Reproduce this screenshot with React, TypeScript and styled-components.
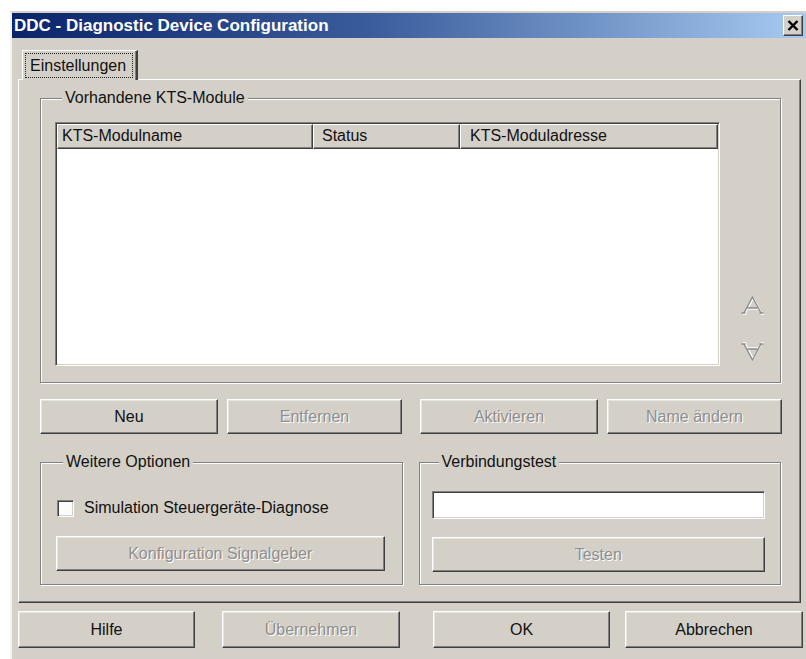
import React from "react";
import styled, { createGlobalStyle, css } from "styled-components";

const FACE = "#d4d0c8";
const SHADOW = "#808080";
const DARK = "#404040";

const GlobalStyle = createGlobalStyle`
  html, body {
    margin: 0;
    padding: 0;
    background: #ffffff;
  }
  body {
    font-family: "Liberation Sans", Arial, sans-serif;
    font-size: 16px;
    color: #111;
  }
  #root {
    width: 806px;
    height: 659px;
    overflow: hidden;
  }
`;

/* ---------- window frame ---------- */

const Window = styled.div`
  margin: 11px 0 0 10px;
  width: 796px;
  height: 660px;
  box-sizing: border-box;
  background: ${FACE};
  border-top: 2px solid ${FACE};
  border-left: 2px solid #f4f3f1;
  display: flex;
  flex-direction: column;
`;

const TitleBar = styled.div`
  height: 25px;
  flex: none;
  display: flex;
  align-items: center;
  justify-content: space-between;
  padding: 0 3px 0 2px;
  background: linear-gradient(90deg, #0a246a 0%, #3a5c9c 45%, #a6caf0 100%);
`;

const Title = styled.span`
  color: #ffffff;
  font-weight: bold;
  font-size: 17px;
  line-height: 25px;
  white-space: nowrap;
`;

const CloseButton = styled.button`
  width: 20px;
  height: 21px;
  padding: 0;
  display: flex;
  align-items: center;
  justify-content: center;
  background: ${FACE};
  border: 1px solid;
  border-color: #ffffff ${DARK} ${DARK} #ffffff;
  box-shadow: inset -1px -1px ${SHADOW};
`;

const Body = styled.div`
  padding: 12px 0 0 6px;
  display: flex;
  flex-direction: column;
`;

/* ---------- tab control ---------- */

const TabStrip = styled.div`
  display: flex;
  padding-left: 4px;
  position: relative;
  z-index: 1;
`;

const Tab = styled.div`
  height: 30px;
  margin-bottom: -1px;
  box-sizing: border-box;
  padding: 2px 3px 2px 2px;
  background: ${FACE};
  border-top: 1px solid #ffffff;
  border-left: 1px solid #ffffff;
  border-right: 2px solid ${DARK};
  box-shadow: inset -1px 0 ${SHADOW};
  display: flex;
`;

const TabFocus = styled.span`
  display: flex;
  align-items: center;
  padding: 0 6px 0 4px;
  border: 1px dotted #222;
  line-height: 18px;
`;

const TabPanel = styled.div`
  width: 783px;
  height: 524px;
  box-sizing: border-box;
  border-top: 1px solid #ffffff;
  border-left: 1px solid #ffffff;
  border-right: 1px solid ${DARK};
  border-bottom: 1px solid ${DARK};
  box-shadow: inset -1px -1px ${SHADOW};
  padding: 9px 19px 17px 21px;
  display: flex;
  flex-direction: column;
`;

/* ---------- group boxes ---------- */

const Group = styled.fieldset`
  margin: 0;
  min-width: 0;
  border: 1px solid ${SHADOW};
  box-shadow: inset 1px 1px #ffffff, 1px 1px #ffffff;
  padding: ${(p: { $pad: string }) => p.$pad};
`;

const Caption = styled.legend`
  margin-left: 7px;
  padding: 0 3px;
  line-height: 18px;
  background: ${FACE};
`;

const ModulesBody = styled.div`
  display: flex;
`;

/* ---------- list view ---------- */

const ListView = styled.div`
  width: 665px;
  height: 244px;
  box-sizing: border-box;
  background: #ffffff;
  border: 1px solid;
  border-color: ${SHADOW} #ffffff #ffffff ${SHADOW};
  box-shadow: inset 1px 1px ${DARK}, inset -1px -1px ${FACE};
  padding: 1px;
`;

const HeaderRow = styled.div`
  display: flex;
  height: 25px;
`;

const HeaderCell = styled.div<{ $w: number; $indent: number }>`
  width: ${(p) => p.$w}px;
  flex: none;
  box-sizing: border-box;
  background: ${FACE};
  border: 1px solid;
  border-color: #ffffff ${DARK} ${DARK} #ffffff;
  box-shadow: inset -1px -1px ${SHADOW};
  padding-left: ${(p) => p.$indent}px;
  line-height: 22px;
  white-space: nowrap;
`;

const ArrowColumn = styled.div`
  flex: 1;
  display: flex;
  flex-direction: column;
  align-items: center;
  justify-content: flex-end;
  gap: 25px;
  padding: 0 0 4px 4px;
`;

/* ---------- buttons ---------- */

const Button = styled.button<{ $disabled?: boolean; $h?: number }>`
  height: ${(p) => p.$h ?? 35}px;
  width: 100%;
  box-sizing: border-box;
  padding: 0;
  font-family: inherit;
  font-size: 16px;
  background: ${FACE};
  border: 1px solid;
  border-color: #ffffff ${DARK} ${DARK} #ffffff;
  box-shadow: inset -1px -1px ${SHADOW}, inset 1px 1px #e6e4df;
  color: #111;
  ${(p) =>
    p.$disabled &&
    css`
      color: #8e8e8e;
      text-shadow: 1px 1px 0 #ffffff;
    `}
`;

const Split = styled.div<{ $gap: number; $top: number }>`
  display: grid;
  grid-template-columns: 1fr 1fr;
  column-gap: ${(p) => p.$gap}px;
  margin-top: ${(p) => p.$top}px;
`;

const Pair = styled.div`
  display: grid;
  grid-template-columns: 178px 175px;
  column-gap: 9px;
`;

/* ---------- options ---------- */

const CheckRow = styled.label`
  display: flex;
  align-items: center;
  gap: 10px;
  height: 20px;
  padding-left: 1px;
`;

const CheckBox = styled.span`
  width: 17px;
  height: 17px;
  box-sizing: border-box;
  background: #fbfbfa;
  border: 1px solid;
  border-color: ${SHADOW} #ffffff #ffffff ${SHADOW};
  box-shadow: inset 1px 1px ${DARK}, inset -1px -1px ${FACE};
`;

const Stack = styled.div<{ $gap: number }>`
  display: flex;
  flex-direction: column;
  gap: ${(p) => p.$gap}px;
`;

const TextField = styled.div`
  height: 28px;
  box-sizing: border-box;
  background: #ffffff;
  border: 1px solid;
  border-color: ${SHADOW} #ffffff #ffffff ${SHADOW};
  box-shadow: inset 1px 1px ${DARK}, inset -1px -1px ${FACE};
`;

/* ---------- dialog footer ---------- */

const Footer = styled.div`
  margin-top: 8px;
  display: flex;
  justify-content: space-between;
  width: 785px;
`;

const FooterGroup = styled.div<{ $gap: number }>`
  display: grid;
  grid-template-columns: 177px 178px;
  column-gap: ${(p) => p.$gap}px;
`;

/* ---------- drawings ---------- */

const CloseGlyph = () => (
  <svg width="12" height="11" viewBox="0 0 12 11">
    <path d="M1.5 1 L10.5 10 M10.5 1 L1.5 10" stroke="#000" strokeWidth="2.4" />
  </svg>
);

const ArrowGlyph = ({ down }: { down?: boolean }) => {
  const shape =
    "M11.5 2 L3 18 M11.5 2 L20 18 M7 13 L16 13 M1 18 L4 18 M19 18 L22 18";
  return (
    <svg
      width="23"
      height="21"
      viewBox="0 0 23 21"
      style={down ? { transform: "scaleY(-1)" } : undefined}
    >
      <g fill="none" strokeWidth="1.3" strokeLinecap="round">
        <path d={shape} stroke="#ffffff" transform="translate(1 1)" />
        <path d={shape} stroke="#8a8a8a" />
      </g>
    </svg>
  );
};

export default function App() {
  return (
    <>
      <GlobalStyle />
      <Window>
        <TitleBar>
          <Title>DDC - Diagnostic Device Configuration</Title>
          <CloseButton aria-label="Schließen">
            <CloseGlyph />
          </CloseButton>
        </TitleBar>
        <Body>
          <TabStrip>
            <Tab>
              <TabFocus>Einstellungen</TabFocus>
            </Tab>
          </TabStrip>
          <TabPanel>
            <Group $pad="15px 0 16px 14px">
              <Caption>Vorhandene KTS-Module</Caption>
              <ModulesBody>
                <ListView>
                  <HeaderRow>
                    <HeaderCell $w={256} $indent={4}>
                      KTS-Modulname
                    </HeaderCell>
                    <HeaderCell $w={147} $indent={8}>
                      Status
                    </HeaderCell>
                    <HeaderCell $w={258} $indent={9}>
                      KTS-Moduladresse
                    </HeaderCell>
                  </HeaderRow>
                </ListView>
                <ArrowColumn>
                  <ArrowGlyph />
                  <ArrowGlyph down />
                </ArrowColumn>
              </ModulesBody>
            </Group>

            <Split $gap={18} $top={16}>
              <Pair>
                <Button>Neu</Button>
                <Button $disabled>Entfernen</Button>
              </Pair>
              <Pair>
                <Button $disabled>Aktivieren</Button>
                <Button $disabled>Name ändern</Button>
              </Pair>
            </Split>

            <Split $gap={16} $top={19}>
              <Group $pad="27px 17px 13px 15px">
                <Caption>Weitere Optionen</Caption>
                <Stack $gap={18}>
                  <CheckRow>
                    <CheckBox />
                    Simulation Steuergeräte-Diagnose
                  </CheckRow>
                  <Button $disabled>Konfiguration Signalgeber</Button>
                </Stack>
              </Group>
              <Group $pad="20px 15px 12px 12px">
                <Caption>Verbindungstest</Caption>
                <Stack $gap={18}>
                  <TextField />
                  <Button $disabled>Testen</Button>
                </Stack>
              </Group>
            </Split>
          </TabPanel>

          <Footer>
            <FooterGroup $gap={27}>
              <Button $h={37}>Hilfe</Button>
              <Button $h={37} $disabled>
                Übernehmen
              </Button>
            </FooterGroup>
            <FooterGroup $gap={15}>
              <Button $h={37}>OK</Button>
              <Button $h={37}>Abbrechen</Button>
            </FooterGroup>
          </Footer>
        </Body>
      </Window>
    </>
  );
}
